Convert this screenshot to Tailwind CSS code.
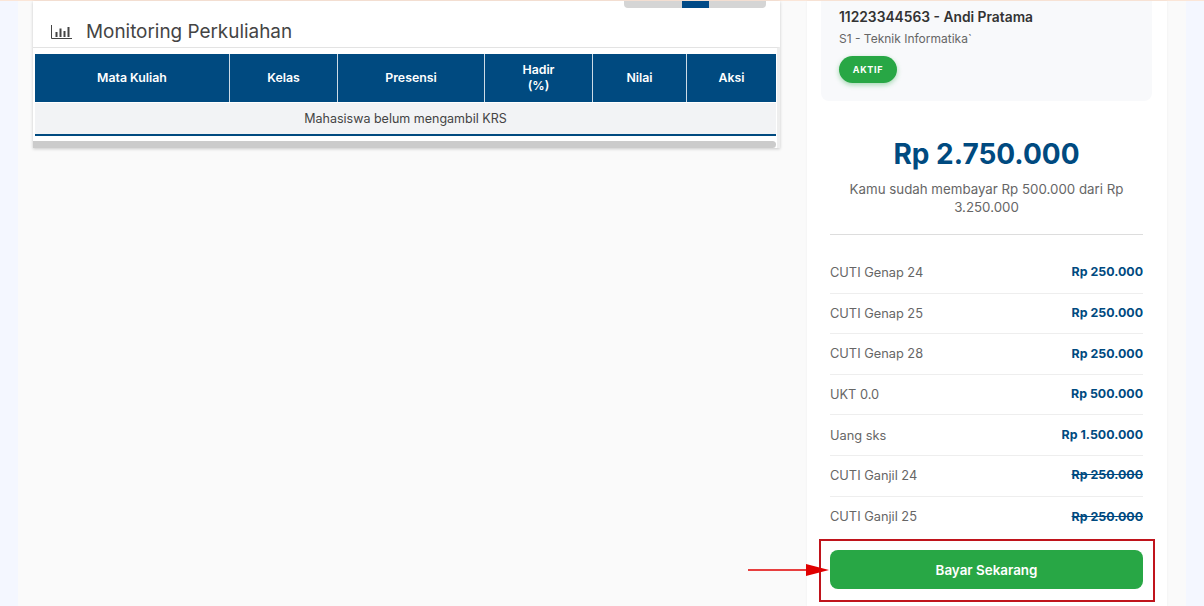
<!DOCTYPE html>
<html><head><meta charset="utf-8"><script src="https://cdn.jsdelivr.net/npm/@tailwindcss/browser@4"></script></head>
<body class="m-0">
<div class="relative w-[1204px] h-[606px] overflow-hidden bg-[#f4f7ff] font-['Inter',sans-serif] text-[#444]">
  <div class="h-px bg-[#fbe6d8]"></div>
  <div class="mx-[18px] h-[605px] bg-[#fafafa] flex items-start pl-[15px]">
    <section class="w-[747px] h-[147px] bg-white shadow-[0_1px_3px_rgba(0,0,0,0.2)] flex flex-col">
      <div class="flex justify-end pr-[14px]">
        <div class="flex w-[142px] h-[7px] rounded-b bg-[#d5d5d5] pl-[58px]"><div class="w-[27px] bg-[#004a87]"></div></div>
      </div>
      <div class="flex items-center gap-[14px] pl-[18px] h-[39px] pt-[9px]">
        <svg width="21" height="15" viewBox="0 0 21 15" fill="none" stroke="#444"><path d="M.5 0v13.5h20.5" /><path d="M5.5 12V7M9.5 12V3.5M13.5 12V6M17.5 12V2" stroke-width="2"/></svg>
        <h2 class="text-[18.9px] leading-none font-normal text-[#444]">Monitoring Perkuliahan</h2>
      </div>
      <div class="h-[101px] border-t border-[#e3e3e3] border-r-[3px] border-r-[#eeeeee] pl-[2px] pt-[6px] flex flex-col">
        <div class="w-[741px] h-[49px] grid grid-cols-[195px_108px_147px_108px_94px_89px] bg-[#004a80] text-white text-[12.3px] font-semibold text-center leading-[16px]">
          <div class="flex items-center justify-center border-r border-white/80">Mata Kuliah</div>
          <div class="flex items-center justify-center border-r border-white/80">Kelas</div>
          <div class="flex items-center justify-center border-r border-white/80">Presensi</div>
          <div class="flex items-center justify-center border-r border-white/80">Hadir<br>(%)</div>
          <div class="flex items-center justify-center border-r border-white/80">Nilai</div>
          <div class="flex items-center justify-center">Aksi</div>
        </div>
        <div class="w-[741px] h-[33px] pt-px bg-[#f2f3f5] border-b-2 border-[#004a80] flex items-center justify-center text-[12.5px] text-[#444] mt-px">Mahasiswa belum mengambil KRS</div>
        <div class="w-[743px] -ml-[2px] h-[7px] mt-[5px] bg-[#cbcbcb] rounded-r"></div>
      </div>
    </section>
    <aside class="ml-[27px] w-[360px] h-[605px] bg-white shadow-[0_0_2px_rgba(0,0,0,0.06)] pl-[14px] pr-[15px] flex flex-col">
      <div class="h-[100px] bg-[#f8f9fb] rounded-b-[8px] pl-[18px] pt-[7px]">
        <div class="text-[13.8px] leading-[18px] font-semibold text-[#333]">11223344563 - Andi Pratama</div>
        <div class="text-[12px] leading-[16px] mt-[5px] text-[#666]">S1 - Teknik Informatika`</div>
        <div class="mt-[9px] w-[58px] h-[27px] rounded-full bg-[#28a745] shadow-[0_2px_5px_rgba(40,167,69,0.4)] flex items-center justify-center text-white text-[9px] font-bold tracking-[0.7px]">AKTIF</div>
      </div>
      <div class="px-[9px] flex-1 flex flex-col">
        <div class="text-center text-[28px] leading-[36px] font-bold text-[#004a80] mt-[35px]">Rp 2.750.000</div>
        <p class="text-center text-[13.3px] leading-[18px] text-[#666] mt-[8px] px-[4px]">Kamu sudah membayar Rp 500.000 dari Rp 3.250.000</p>
        <div class="h-px bg-[#ddd] mt-[18px] mb-[18px]"></div>
        <ul class="flex flex-col text-[12.8px] text-[#666]">
          <li class="h-[40.6px] flex items-center justify-between border-b border-[#eee]"><span>CUTI Genap 24</span><b class="text-[12.4px] font-bold text-[#004a80]">Rp 250.000</b></li>
          <li class="h-[40.6px] flex items-center justify-between border-b border-[#eee]"><span>CUTI Genap 25</span><b class="text-[12.4px] font-bold text-[#004a80]">Rp 250.000</b></li>
          <li class="h-[40.6px] flex items-center justify-between border-b border-[#eee]"><span>CUTI Genap 28</span><b class="text-[12.4px] font-bold text-[#004a80]">Rp 250.000</b></li>
          <li class="h-[40.6px] flex items-center justify-between border-b border-[#eee]"><span>UKT 0.0</span><b class="text-[12.4px] font-bold text-[#004a80]">Rp 500.000</b></li>
          <li class="h-[40.6px] flex items-center justify-between border-b border-[#eee]"><span>Uang sks</span><b class="text-[12.4px] font-bold text-[#004a80]">Rp 1.500.000</b></li>
          <li class="h-[40.6px] flex items-center justify-between border-b border-[#eee]"><span>CUTI Ganjil 24</span><b class="text-[12.4px] font-bold text-[#004a80] line-through">Rp 250.000</b></li>
          <li class="h-[40.6px] flex items-center justify-between"><span>CUTI Ganjil 25</span><b class="text-[12.4px] font-bold text-[#004a80] line-through">Rp 250.000</b></li>
        </ul>
        <button class="mt-[13px] h-[39px] rounded-[8px] bg-[#28a745] text-white text-[13.4px] font-semibold">Bayar Sekarang</button>
      </div>
    </aside>
  </div>
  <div class="absolute left-[819px] top-[539px] w-[336px] h-[63px] border-2 border-[#c0141c]"></div>
  <svg class="absolute left-[748px] top-[562px]" width="82" height="16" viewBox="0 0 82 16"><path d="M0 8h60" stroke="#e00000" stroke-width="1.5"/><path d="M58 2l23 6-23 6z" fill="#e00000"/></svg>
</div>
</body></html>
